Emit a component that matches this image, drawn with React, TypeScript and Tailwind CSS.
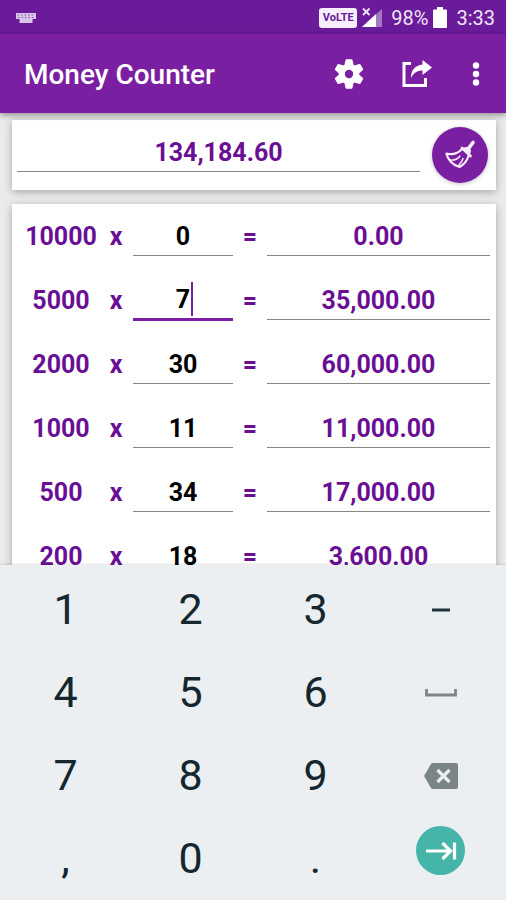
import { useState } from "react";
import clsx from "clsx";

type Row = { value: number; count: string };

const initialRows: Row[] = [
  { value: 10000, count: "0" },
  { value: 5000, count: "7" },
  { value: 2000, count: "30" },
  { value: 1000, count: "11" },
  { value: 500, count: "34" },
  { value: 200, count: "18" },
];

// small notes and coins carried over from the last count
const CARRIED = 7584.6;

const keys = ["1", "2", "3", "-", "4", "5", "6", "space", "7", "8", "9", "back", ",", "0", ".", "next"];

function money(n: number) {
  return n.toLocaleString("en-US", { minimumFractionDigits: 2, maximumFractionDigits: 2 });
}

function StatusBar() {
  return (
    <div className="flex h-[34px] shrink-0 items-center bg-[#6a1b9a] pt-[2px] pr-[11px] pl-4 text-xl text-[#efe3f5]">
      <svg className="h-3 w-5" viewBox="0 0 20 12" fill="#d9c3e6">
        <path d="M0 1h20v6h-3.500v4h-13V7H0z" />
        <path
          d="M1.500 3h17M2 5.500h16"
          stroke="#8d56b3"
          strokeWidth="1"
          strokeDasharray="1.500 2"
          fill="none"
        />
      </svg>
      <span className="ml-auto flex h-5 w-[38px] items-center justify-center rounded-[3px] bg-[#f6eefa] text-[11px] font-bold text-[#6a1b9a]">
        VoLTE
      </span>
      <svg className="ml-1 h-[22px] w-[22px]" viewBox="0 0 22 22">
        <path d="M21 2v18H1z" fill="#a678c4" />
        <path d="M15 7v13H1z" fill="#fff" />
        <path d="M2 1.500l6.500 6.500M8.500 1.500L2 8" stroke="#f0e4f6" strokeWidth="1.800" />
      </svg>
      <span className="ml-2">98%</span>
      <svg className="ml-1 h-[22px] w-4" viewBox="0 0 16 22" fill="#fff">
        <path d="M5 0h6v2.500h3a1 1 0 0 1 1 1V20a1 1 0 0 1-1 1H2a1 1 0 0 1-1-1V3.500a1 1 0 0 1 1-1h3z" />
      </svg>
      <span className="ml-2">3:33</span>
    </div>
  );
}

function Gear() {
  return (
    <svg className="size-[30px]" viewBox="-15 -15 30 30">
      <circle r="7.200" fill="none" stroke="#fff" strokeWidth="6" />
      {[0, 60, 120, 180, 240, 300].map((deg) => (
        <path key={deg} d="M-4.800-8l1.300-6q.2-.7 1-.7h5q.8 0 1 .7l1.300 6z" fill="#fff" transform={`rotate(${deg})`} />
      ))}
    </svg>
  );
}

function AppBar() {
  return (
    <header className="relative z-10 flex h-[79px] shrink-0 items-center bg-[#7b1fa2] pr-[22px] pl-6 text-white shadow-[0_2px_6px_rgba(0,0,0,0.4)]">
      <h1 className="flex-1 pt-[3px] text-[28px] font-medium">Money Counter</h1>
      <button aria-label="Settings" className="mr-[38px]">
        <Gear />
      </button>
      <button aria-label="Share" className="mr-9">
        <svg className="h-7 w-[30px]" viewBox="0 0 30 28" fill="none">
          <path d="M9 3.500H2v22h21.500V18" stroke="#fff" strokeWidth="3" />
          <path d="M20.500 0L30 7.500l-9.500 7.500v-4.500C15 10.500 12 12.500 9 18c0-8 4-12.500 11.500-13.500z" fill="#fff" />
        </svg>
      </button>
      <button aria-label="More" className="px-1">
        <svg className="h-6 w-2" viewBox="0 0 8 24" fill="#fff">
          <circle cx="4" cy="3.500" r="3.200" />
          <circle cx="4" cy="12" r="3.200" />
          <circle cx="4" cy="20.500" r="3.200" />
        </svg>
      </button>
    </header>
  );
}

function Broom() {
  return (
    <svg className="size-8" viewBox="0 0 32 32" fill="none" stroke="#f8effb" strokeLinecap="round" strokeLinejoin="round">
      <path d="M24.500 9.500L29 3.500" strokeWidth="3.600" />
      <path d="M19.500 9.500q3.500-1.500 5.500 0t.5 5" fill="#f8effb" strokeWidth="1.500" />
      <path d="M18 9l8.500 8" strokeWidth="2.800" />
      <path d="M17.500 10.500C13.500 14.500 8 16 2.500 14.500c1 6 6 11.500 13 13.500 4.500-2.500 7.500-6 9-11" strokeWidth="2.200" />
      <path d="M6 21c4 .5 7.500-.5 10-4M14.500 26.500c2-2 4-4.500 4.500-7" strokeWidth="1.400" />
    </svg>
  );
}

function Key({ name, onPress }: { name: string; onPress: (k: string) => void }) {
  let face: React.ReactNode = name;
  if (name === "-") {
    face = (
      <svg className="h-1 w-5" viewBox="0 0 20 4">
        <path d="M1 2h18" stroke="#1d3238" strokeWidth="3" />
      </svg>
    );
  } else if (name === "space") {
    face = (
      <svg className="h-2 w-8" viewBox="0 0 32 8" fill="none" stroke="#7f8689" strokeWidth="2.800">
        <path d="M1.500 0v6h29V0" />
      </svg>
    );
  } else if (name === "back") {
    face = (
      <svg className="h-[26px] w-[34px]" viewBox="0 0 34 26">
        <path d="M9 0h23a2 2 0 0 1 2 2v22a2 2 0 0 1-2 2H9Q7.500 26 7 25L0 13 7 1Q7.500 0 9 0z" fill="#7b8487" />
        <path d="M13.500 7l12 12M25.500 7l-12 12" stroke="#eceff1" strokeWidth="3.200" />
      </svg>
    );
  } else if (name === "next") {
    face = (
      <span className="flex size-[49px] items-center justify-center rounded-full bg-[#45b5aa]">
        <svg className="h-5 w-8" viewBox="0 0 32 20" fill="none" stroke="#fff" strokeWidth="3.200">
          <path d="M1 10h24M17.500 2l8 8-8 8M29.500 1.500v17" />
        </svg>
      </span>
    );
  }

  return (
    <button
      aria-label={name}
      onClick={() => onPress(name)}
      className={clsx("flex h-[83px] items-center justify-center", name === "next" && "pb-4")}
    >
      {face}
    </button>
  );
}

export default function App() {
  const [rows, setRows] = useState(initialRows);
  const [active, setActive] = useState(1);
  const [carried, setCarried] = useState(CARRIED);

  const total = rows.reduce((sum, r) => sum + r.value * Number(r.count), carried);

  function setCount(i: number, count: string) {
    setRows(rows.map((r, j) => (j === i ? { ...r, count: count.replace(/\D/g, "") } : r)));
  }

  function press(key: string) {
    const count = rows[active].count;
    if (key === "next") setActive((active + 1) % rows.length);
    else if (key === "back") setCount(active, count.slice(0, -1));
    else setCount(active, count + key);
  }

  function clear() {
    setRows(rows.map((r) => ({ ...r, count: "0" })));
    setCarried(0);
  }

  return (
    <div className="flex h-screen flex-col overflow-hidden bg-[#ebebeb] font-[Roboto,sans-serif]">
      <StatusBar />
      <AppBar />

      <main className="min-h-0 flex-1 overflow-hidden pt-[7px] pr-[10px] pl-3 text-[25px] font-bold text-[#6a0f94]">
        <section className="flex h-[70px] items-center bg-white pr-2 pl-[5px] shadow-[0_2px_8px_rgba(0,0,0,0.3)]">
          <div className="min-w-0 flex-1 pb-[6px]">
            <input
              aria-label="Total"
              readOnly
              value={money(total)}
              className="h-10 w-full border-b border-[#868686] pt-[2px] text-center outline-none"
            />
          </div>
          <button
            aria-label="Clear"
            onClick={clear}
            className="ml-3 flex size-14 items-center justify-center rounded-full bg-[#7b1fa2] shadow-[0_1px_4px_rgba(0,0,0,0.25)]"
          >
            <Broom />
          </button>
        </section>

        <section className="mt-[14px] bg-white pr-[6px] pl-[11px] shadow-[0_2px_8px_rgba(0,0,0,0.3)]">
          {rows.map((row, i) => (
            <div key={row.value} className="grid h-16 grid-cols-[76px_34px_100px_34px_1fr] items-center text-center">
              <label htmlFor={`count-${row.value}`} className="pt-[2px]">
                {row.value}
              </label>
              <span className="pt-[2px]">x</span>
              <div className="relative">
                <input
                  id={`count-${row.value}`}
                  inputMode="none"
                  value={row.count}
                  onFocus={() => setActive(i)}
                  onChange={(e) => setCount(i, e.target.value)}
                  className={clsx(
                    "block w-full pt-[2px] text-center text-black caret-transparent outline-none",
                    i === active ? "h-[42px] border-b-3 border-[#7b1fa2]" : "h-10 border-b border-[#868686]"
                  )}
                />
                {i === active && (
                  <span
                    className="absolute top-[3px] h-[34px] w-[2px] bg-[#7b1fa2]"
                    style={{ left: `calc(50% + ${row.count.length * 8}px)` }}
                  />
                )}
              </div>
              <span className="pt-[2px]">=</span>
              <output htmlFor={`count-${row.value}`} className="block h-10 border-b border-[#868686] pt-[2px] leading-[37px]">
                {money(row.value * Number(row.count))}
              </output>
            </div>
          ))}
        </section>
      </main>

      <div className="relative z-10 grid shrink-0 grid-cols-4 bg-[#ebeff2] px-[3px] pt-[3px] text-[43px] text-[#14272e] shadow-[0_-1px_2px_rgba(0,0,0,0.12)]">
        {keys.map((k) => (
          <Key key={k} name={k} onPress={press} />
        ))}
      </div>
    </div>
  );
}
